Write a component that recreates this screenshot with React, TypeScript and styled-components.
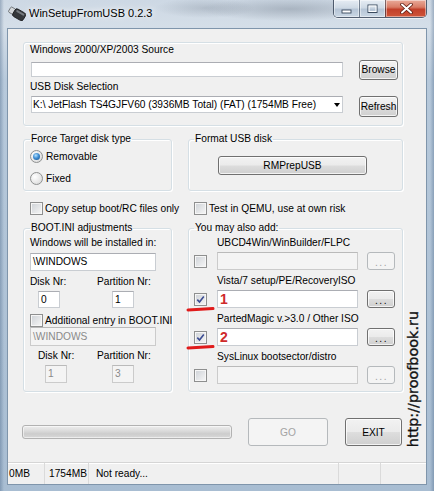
import React from "react";
import styled, { createGlobalStyle, css } from "styled-components";

const GlobalStyle = createGlobalStyle`
  html, body { margin: 0; padding: 0; }
  body {
    background: #c7d4e1;
    font-family: "Liberation Sans", Arial, sans-serif;
    font-size: 10.2px;
    color: #000;
  }
  *, *::before, *::after { box-sizing: border-box; }
`;

const Window = styled.div`
  position: relative;
  width: 434px;
  height: 491px;
  display: flex;
  flex-direction: column;
  padding: 0 7px 6px;
  overflow: hidden;
  background:
    radial-gradient(ellipse 90px 12px at 290px 9px, rgba(70, 82, 98, 0.28), transparent),
    radial-gradient(ellipse 50px 10px at 205px 8px, rgba(70, 82, 98, 0.2), transparent),
    linear-gradient(90deg, rgba(60, 90, 125, 0.35) 0px, transparent 4px, transparent 430px, rgba(60, 90, 125, 0.35) 434px),
    linear-gradient(180deg, #cdd8e4 0px, #d4dee8 26px, #b7c9db 80px, #a8bdd2 100%);
`;

const TitleBar = styled.div`
  height: 28px;
  flex: none;
  display: flex;
  align-items: flex-start;
`;

const AppIcon = styled.svg`
  flex: none;
  margin: 6px 0 0 1px;
`;

const TitleText = styled.div`
  margin: 6px 0 0 3px;
  font-size: 11px;
  line-height: 14px;
  white-space: nowrap;
  text-shadow: 0 0 5px rgba(255, 255, 255, 0.95), 0 0 10px rgba(255, 255, 255, 0.85);
`;

const CaptionGroup = styled.div`
  margin-left: auto;
  display: flex;
  height: 18px;
  border: 1px solid rgba(40, 54, 74, 0.75);
  border-top: none;
  border-radius: 0 0 5px 5px;
  overflow: hidden;
  box-shadow: 0 1px 0 rgba(255, 255, 255, 0.6);
`;

const CapButton = styled.div<{ $w: number; $close?: boolean }>`
  width: ${(p) => p.$w}px;
  display: flex;
  align-items: center;
  justify-content: center;
  box-shadow: inset 0 0 0 1px rgba(255, 255, 255, 0.45);
  background: ${(p) =>
    p.$close
      ? "linear-gradient(180deg, #e9ab9a 0%, #d97c66 42%, #c2402a 55%, #cf5539 100%)"
      : "linear-gradient(180deg, #e6edf4 0%, #cfdae5 45%, #b6c5d6 55%, #cad7e4 100%)"};
  & + & {
    border-left: 1px solid rgba(40, 54, 74, 0.55);
  }
`;

const Client = styled.div`
  flex: 1;
  display: flex;
  flex-direction: column;
  background: #f0f0f0;
  border: 1px solid #7f95ab;
`;

const Content = styled.div`
  flex: 1;
  padding: 13px 0 0 15px;
  display: flex;
  flex-direction: column;
  align-items: flex-start;
`;

const TopGroup = styled.div`
  width: 380px;
  height: 84px;
  flex: none;
  border: 1px solid #d5dfe5;
  border-radius: 3px;
  box-shadow: inset 1px 1px 0 #fff, 1px 1px 0 #fff;
  padding: 1px 0 0 6px;
  display: flex;
  flex-direction: column;
  align-items: flex-start;
`;

const GroupPair = styled.div<{ $mt: number }>`
  display: grid;
  grid-template-columns: 149px 215px;
  column-gap: 16px;
  margin-top: ${(p) => p.$mt}px;
`;

const Fieldset = styled.fieldset<{ $pl: number; $pb?: number }>`
  margin: 0;
  min-width: 0;
  padding: 0 0 ${(p) => p.$pb ?? 0}px ${(p) => p.$pl}px;
  border: 1px solid #d5dfe5;
  border-radius: 3px;
  box-shadow: inset 1px 1px 0 #fff, 1px 1px 0 #fff;
`;

const Legend = styled.legend`
  padding: 0 1px;
  margin: 0;
  font-size: 10.2px;
  line-height: 12px;
  white-space: nowrap;
`;

const Stack = styled.div<{ $gap?: number; $pt?: number }>`
  display: flex;
  flex-direction: column;
  align-items: flex-start;
  gap: ${(p) => p.$gap ?? 0}px;
  padding-top: ${(p) => p.$pt ?? 0}px;
`;

const Caption = styled.div<{ $mt?: number; $ml?: number; $h?: number }>`
  height: ${(p) => p.$h ?? 12}px;
  line-height: ${(p) => p.$h ?? 12}px;
  margin-top: ${(p) => p.$mt ?? 0}px;
  margin-left: ${(p) => p.$ml ?? 0}px;
  white-space: nowrap;
`;

const Line = styled.div<{ $mt?: number; $h: number; $align?: string }>`
  position: relative;
  display: flex;
  align-items: ${(p) => p.$align ?? "center"};
  height: ${(p) => p.$h}px;
  margin-top: ${(p) => p.$mt ?? 0}px;
`;

const NrGrid = styled.div<{ $mt: number; $h: number }>`
  display: grid;
  grid-template-columns: 67px auto;
  align-items: center;
  height: ${(p) => p.$h}px;
  margin-top: ${(p) => p.$mt}px;
`;

const TextBox = styled.div<{ $w: number; $h: number; $ml?: number; $disabled?: boolean }>`
  flex: none;
  width: ${(p) => p.$w}px;
  height: ${(p) => p.$h}px;
  margin-left: ${(p) => p.$ml ?? 0}px;
  line-height: ${(p) => p.$h - 2}px;
  padding-left: 2px;
  white-space: nowrap;
  overflow: hidden;
  border: 1px solid ${(p) => (p.$disabled ? "#cbcbcb" : "#c9cdd2")};
  border-top-color: ${(p) => (p.$disabled ? "#bababa" : "#abadb3")};
  background: ${(p) => (p.$disabled ? "#f4f4f4" : "#fff")};
  color: ${(p) => (p.$disabled ? "#8a8a8a" : "#000")};
`;

const Combo = styled.div`
  flex: none;
  width: 312px;
  height: 17px;
  margin-left: 1px;
  display: flex;
  align-items: center;
  padding-left: 1px;
  border: 1px solid #c9cdd2;
  border-top-color: #abadb3;
  background: #fff;
  white-space: nowrap;
`;

const ComboArrow = styled.span`
  margin-left: auto;
  margin-right: 2px;
  width: 0;
  height: 0;
  border-left: 3.5px solid transparent;
  border-right: 3.5px solid transparent;
  border-top: 4px solid #000;
`;

const Button = styled.button<{ $w: number; $h: number; $ml?: number; $mt?: number; $disabled?: boolean }>`
  flex: none;
  width: ${(p) => p.$w}px;
  height: ${(p) => p.$h}px;
  margin: ${(p) => p.$mt ?? 0}px 0 0 ${(p) => p.$ml ?? 0}px;
  padding: 0;
  font: inherit;
  font-size: 10.2px;
  display: flex;
  align-items: center;
  justify-content: center;
  border-radius: 3px;
  ${(p) =>
    p.$disabled
      ? css`
          border: 1px solid #b5b9bc;
          background: #f4f4f4;
          color: #a3a3a3;
        `
      : css`
          border: 1px solid #707070;
          background: linear-gradient(180deg, #f2f2f2 0%, #ebebeb 48%, #dddddd 52%, #cfcfcf 100%);
          box-shadow: inset 0 0 0 1px rgba(255, 255, 255, 0.75);
          color: #000;
        `}
`;

const Dots = styled.span`
  letter-spacing: 1.5px;
  margin-top: 3px;
  margin-left: 1px;
`;

const OptionLabel = styled.div<{ $ml?: number; $mt?: number }>`
  display: flex;
  align-items: center;
  gap: 2px;
  height: 14px;
  margin-left: ${(p) => p.$ml ?? 0}px;
  margin-top: ${(p) => p.$mt ?? 0}px;
  white-space: nowrap;
`;

const Radio = styled.span<{ $checked?: boolean }>`
  position: relative;
  flex: none;
  width: 13px;
  height: 13px;
  margin-right: 1px;
  border-radius: 50%;
  border: 1px solid #8f9191;
  background: radial-gradient(circle at 35% 35%, #ffffff 0%, #e6e6e6 60%, #d0d0d0 100%);
  ${(p) =>
    p.$checked &&
    css`
      &::after {
        content: "";
        position: absolute;
        left: 2px;
        top: 2px;
        width: 7px;
        height: 7px;
        border-radius: 50%;
        background: radial-gradient(circle at 40% 35%, #b5e2ff 0%, #3f8ed4 45%, #154b82 100%);
      }
    `}
`;

const CheckBox = styled.span`
  flex: none;
  width: 13px;
  height: 13px;
  display: flex;
  align-items: center;
  justify-content: center;
  border: 1px solid #8e8f8f;
  background: linear-gradient(135deg, #cdd1d6 0%, #f7f7f7 100%);
  box-shadow: inset 0 0 0 1px #f6f6f6;
`;

const RedMark = styled.svg`
  position: absolute;
  left: -8px;
  top: 16px;
`;

const RedNum = styled.span`
  color: #cf2a2a;
  font-weight: bold;
  font-size: 14px;
  line-height: 16px;
`;

const ActionRow = styled.div`
  display: flex;
  align-items: center;
  height: 28px;
  margin-top: 26px;
  margin-left: -1px;
`;

const Progress = styled.div`
  flex: none;
  width: 210px;
  height: 14px;
  border: 1px solid #b2b2b2;
  border-radius: 3px;
  background: linear-gradient(180deg, #eeeeee 0%, #dedede 35%, #cdcdcd 65%, #d8d8d8 100%);
  box-shadow: inset 0 0 0 1px rgba(255, 255, 255, 0.55);
`;

const StatusBar = styled.div`
  flex: none;
  height: 22px;
  display: flex;
  border-top: 1px solid #d5d5d5;
  box-shadow: inset 0 1px 0 #fff;
`;

const StatusCell = styled.div<{ $w?: number; $pl: number; $last?: boolean }>`
  ${(p) => (p.$w ? `width: ${p.$w}px; flex: none;` : "flex: 1;")}
  padding-left: ${(p) => p.$pl}px;
  line-height: 21px;
  white-space: nowrap;
  border-right: ${(p) => (p.$last ? "none" : "1px solid #dadada")};
`;

const Watermark = styled.div`
  position: absolute;
  left: 405px;
  bottom: 44px;
  writing-mode: vertical-rl;
  transform: rotate(180deg);
  font-family: "DejaVu Sans", sans-serif;
  font-size: 14.4px;
  line-height: 17px;
  color: #111;
  -webkit-text-stroke: 0.35px #111;
  white-space: nowrap;
`;

const Tick = () => (
  <svg width="9" height="9" viewBox="0 0 9 9">
    <path d="M1.3 4.6 L3.5 7 L7.8 1.4" fill="none" stroke="#3b4c92" strokeWidth="1.6" />
  </svg>
);

const Underline = () => (
  <RedMark width="30" height="6" viewBox="0 0 30 6">
    <path d="M2 4 Q 15 3.6 27 2.6" fill="none" stroke="#e01b1b" strokeWidth="3" strokeLinecap="round" />
  </RedMark>
);

type AddItem = { label: string; checked: boolean; mark?: string };

const addItems: AddItem[] = [
  { label: "UBCD4Win/WinBuilder/FLPC", checked: false },
  { label: "Vista/7 setup/PE/RecoveryISO", checked: true, mark: "1" },
  { label: "PartedMagic v.>3.0 / Other ISO", checked: true, mark: "2" },
  { label: "SysLinux bootsector/distro", checked: false },
];

export default function App() {
  return (
    <>
      <GlobalStyle />
      <Window>
        <TitleBar>
          <AppIcon width="18" height="15" viewBox="0 0 18 15">
            <g transform="rotate(30 9 7.5)">
              <rect x="0.5" y="4.5" width="6" height="6" rx="1" fill="#d3d7da" stroke="#6a6e72" strokeWidth="0.8" />
              <rect x="5.5" y="3.2" width="12" height="8.6" rx="2.2" fill="#34373a" stroke="#17181a" strokeWidth="0.8" />
              <rect x="7" y="4.3" width="9" height="2" rx="1" fill="#74797e" />
            </g>
          </AppIcon>
          <TitleText>WinSetupFromUSB 0.2.3</TitleText>
          <CaptionGroup>
            <CapButton $w={25}>
              <svg width="11" height="12" viewBox="0 0 11 12">
                <rect x="1" y="7" width="9" height="3" fill="#fff" stroke="#3a4a5e" strokeWidth="0.9" />
              </svg>
            </CapButton>
            <CapButton $w={26}>
              <svg width="11" height="10" viewBox="0 0 11 10">
                <rect x="1" y="1" width="9" height="7.5" fill="none" stroke="#3a4a5e" strokeWidth="1" />
                <rect x="2" y="2" width="7" height="5.5" fill="none" stroke="#fff" strokeWidth="1" />
              </svg>
            </CapButton>
            <CapButton $w={41} $close>
              <svg width="13" height="11" viewBox="0 0 13 11">
                <path d="M2 1.5 L11 9.5 M11 1.5 L2 9.5" stroke="#5a1a10" strokeWidth="3.6" strokeLinecap="round" />
                <path d="M2 1.5 L11 9.5 M11 1.5 L2 9.5" stroke="#fff" strokeWidth="2" strokeLinecap="round" />
              </svg>
            </CapButton>
          </CaptionGroup>
        </TitleBar>

        <Client>
          <Content>
            <TopGroup>
              <Caption>Windows 2000/XP/2003 Source</Caption>
              <Line $mt={3} $h={21}>
                <TextBox $w={312} $h={15} $ml={1} />
                <Button $w={39} $h={20} $ml={16}>Browse</Button>
              </Line>
              <Caption $mt={1}>USB Disk Selection</Caption>
              <Line $mt={3} $h={21} $align="flex-start">
                <Combo>
                  K:\ JetFlash TS4GJFV60 (3936MB Total) (FAT) (1754MB Free)
                  <ComboArrow />
                </Combo>
                <Button $w={39} $h={21} $ml={16}>Refresh</Button>
              </Line>
            </TopGroup>

            <GroupPair $mt={7}>
              <Fieldset $pl={6} $pb={5}>
                <Legend>Force Target disk type</Legend>
                <Stack>
                  <OptionLabel $mt={4}>
                    <Radio $checked />
                    Removable
                  </OptionLabel>
                  <OptionLabel $mt={8}>
                    <Radio />
                    Fixed
                  </OptionLabel>
                </Stack>
              </Fieldset>
              <Fieldset $pl={5}>
                <Legend>Format USB disk</Legend>
                <Stack>
                  <Button $w={149} $h={19} $ml={24} $mt={11}>
                    RMPrepUSB
                  </Button>
                </Stack>
              </Fieldset>
            </GroupPair>

            <GroupPair $mt={10}>
              <OptionLabel $ml={7}>
                <CheckBox />
                Copy setup boot/RC files only
              </OptionLabel>
              <OptionLabel $ml={6}>
                <CheckBox />
                Test in QEMU, use at own risk
              </OptionLabel>
            </GroupPair>

            <GroupPair $mt={7}>
              <Fieldset $pl={6} $pb={8}>
                <Legend>BOOT.INI adjustments</Legend>
                <Stack>
                  <Caption $mt={2} $h={14}>Windows will be installed in:</Caption>
                  <Line $mt={3} $h={18}>
                    <TextBox $w={126} $h={18}>\WINDOWS</TextBox>
                  </Line>
                  <NrGrid $mt={4} $h={14}>
                    <Caption $h={14}>Disk Nr:</Caption>
                    <Caption $h={14}>Partition Nr:</Caption>
                  </NrGrid>
                  <NrGrid $mt={1} $h={18}>
                    <TextBox $w={22} $h={17} $ml={8}>0</TextBox>
                    <TextBox $w={22} $h={17} $ml={15}>1</TextBox>
                  </NrGrid>
                  <OptionLabel $mt={5}>
                    <CheckBox />
                    Additional entry in BOOT.INI
                  </OptionLabel>
                  <TextBox $w={126} $h={19} $disabled>\WINDOWS</TextBox>
                  <NrGrid $mt={3} $h={14}>
                    <Caption $h={14} $ml={8}>Disk Nr:</Caption>
                    <Caption $h={14}>Partition Nr:</Caption>
                  </NrGrid>
                  <NrGrid $mt={2} $h={18}>
                    <TextBox $w={22} $h={18} $ml={15} $disabled>1</TextBox>
                    <TextBox $w={22} $h={18} $ml={15} $disabled>3</TextBox>
                  </NrGrid>
                </Stack>
              </Fieldset>
              <Fieldset $pl={5}>
                <Legend>You may also add:</Legend>
                <Stack $pt={2} $gap={4}>
                  {addItems.map((it) => (
                    <div key={it.label}>
                      <Caption $h={14} $ml={23}>{it.label}</Caption>
                      <Line $mt={2} $h={18}>
                        <CheckBox>{it.checked && <Tick />}</CheckBox>
                        <TextBox $w={141} $h={18} $ml={10} $disabled={!it.checked}>
                          {it.mark && <RedNum>{it.mark}</RedNum>}
                        </TextBox>
                        <Button $w={28} $h={18} $ml={9} $disabled={!it.checked}>
                          <Dots>...</Dots>
                        </Button>
                        {it.mark && <Underline />}
                      </Line>
                    </div>
                  ))}
                </Stack>
              </Fieldset>
            </GroupPair>

            <ActionRow>
              <Progress />
              <Button $w={80} $h={28} $ml={16} $disabled>GO</Button>
              <Button $w={57} $h={28} $ml={17}>EXIT</Button>
            </ActionRow>
          </Content>

          <StatusBar>
            <StatusCell $w={37} $pl={1}>0MB</StatusCell>
            <StatusCell $w={44} $pl={4}>1754MB</StatusCell>
            <StatusCell $w={250} $pl={7}>Not ready...</StatusCell>
            <StatusCell $w={42} $pl={4} />
            <StatusCell $pl={4} $last />
          </StatusBar>
        </Client>

        <Watermark>http://proofbook.ru</Watermark>
      </Window>
    </>
  );
}
